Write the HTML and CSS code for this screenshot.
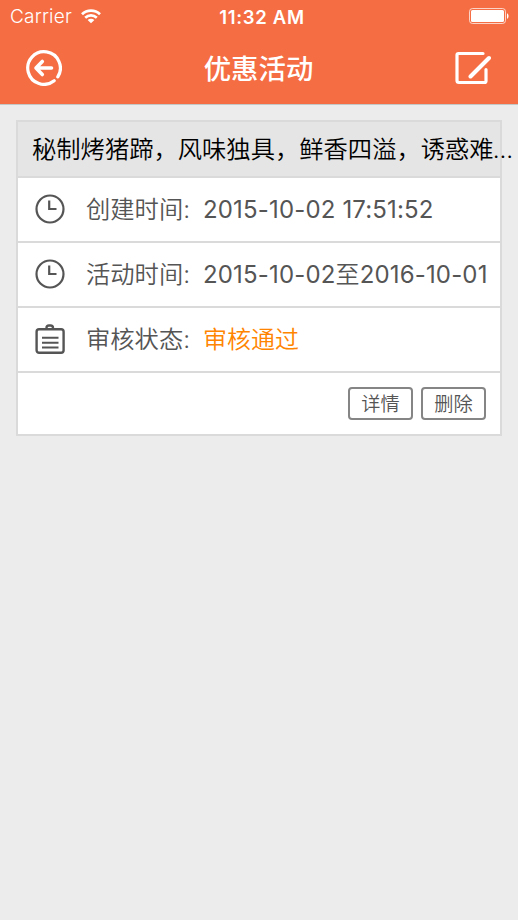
FILE: index.html
```
<!DOCTYPE html>
<html lang="zh-CN">
<head>
    <meta charset="UTF-8">
    <meta name="viewport" content="width=device-width, initial-scale=1.0">
    <title>优惠活动</title>
    <link rel="stylesheet" href="styles.css">
</head>
<body>

    <header class="top">
        <!-- Status bar -->
        <div class="status-bar">
            <div class="carrier">
                <span>Carrier</span>
                <svg width="20" height="15" viewBox="0 0 20 15" fill="none" stroke="#fff" stroke-width="2.7">
                    <path d="M1 5.2C6 0.3 14 0.3 19 5.2"/>
                    <path d="M4.2 8.7C7.5 5.6 12.5 5.6 15.8 8.7"/>
                    <path d="M10 14.3L6.6 11C8.6 9.3 11.4 9.3 13.4 11Z" fill="#fff" stroke="none"/>
                </svg>
            </div>
            <span class="clock">11:32 AM</span>
            <svg class="battery" width="40" height="17" viewBox="0 0 40 17">
                <rect x="0.5" y="0.5" width="36" height="15" rx="3" fill="none" stroke="#fff" stroke-opacity="0.7"/>
                <rect x="2" y="2" width="33" height="12" rx="1.5" fill="#fff"/>
                <path d="M38 5.2C40 6 40 10 38 10.8Z" fill="#fff"/>
            </svg>
        </div>

        <!-- Navigation -->
        <nav class="nav-bar">
            <a href="#" aria-label="返回">
                <svg width="36" height="36" viewBox="0 0 36 36" fill="none" stroke="#fff" stroke-width="3.2" stroke-linecap="round" stroke-linejoin="round">
                    <path d="M28.2 30.8A16.3 16.3 0 1 1 31.8 26.8"/>
                    <path d="M25.5 18H10M16.3 11.5L10 18L16.3 24.5" stroke-width="3.6"/>
                </svg>
            </a>
            <h1>优惠活动</h1>
            <a href="#" aria-label="编辑">
                <svg width="36" height="34" viewBox="0 0 36 34" fill="none" stroke="#fff" stroke-width="3.2" stroke-linecap="round" stroke-linejoin="round">
                    <path d="M28 2.5H3.5Q2 2.5 2 4V29.5Q2 31.5 4 31.5H29.5Q31 31.5 31 30V18.5"/>
                    <path d="M15.5 25.5L34 7" stroke-width="4"/>
                </svg>
            </a>
        </nav>
    </header>

    <main>
        <section class="card">
            <h2>秘制烤猪蹄，风味独具，鲜香四溢，诱惑难<span class="dots">...</span></h2>

            <div class="row">
                <svg class="icon" width="30" height="30" viewBox="0 0 30 30" fill="none" stroke="#555" stroke-width="2.2">
                    <circle cx="15" cy="15" r="13.5"/>
                    <path d="M14.2 6.5V15H21.5"/>
                </svg>
                <span class="label">创建时间:</span>
                <span class="date">2015-10-02 17:51:52</span>
            </div>

            <div class="row">
                <svg class="icon" width="30" height="30" viewBox="0 0 30 30" fill="none" stroke="#555" stroke-width="2.2">
                    <circle cx="15" cy="15" r="13.5"/>
                    <path d="M14.2 6.5V15H21.5"/>
                </svg>
                <span class="label">活动时间:</span>
                <span class="date">2015-10-02<span class="to">至</span>2016-10-01</span>
            </div>

            <div class="row">
                <svg class="icon" width="30" height="30" viewBox="0 0 30 30" fill="none" stroke="#555" stroke-width="2.4">
                    <rect x="1.6" y="5.3" width="27" height="23.5" rx="2.5"/>
                    <path d="M11.5 5V4Q11.5 1.5 14 1.5H15.5Q18 1.5 18 4V5"/>
                    <path d="M7 13.8H23.5M7 18.7H23.5M7 23.6H23.5" stroke-width="2"/>
                </svg>
                <span class="label">审核状态:</span>
                <span class="state">审核通过</span>
            </div>

            <div class="actions">
                <button type="button">详情</button>
                <button type="button">删除</button>
            </div>
        </section>
    </main>

</body>
</html>
```

FILE: styles.css
```
* {
    box-sizing: border-box;
}

body {
    margin: 0;
    min-height: 920px;
    overflow-x: hidden;
    background-color: #ececec;
    font-family: Inter, 'Noto Sans CJK SC', sans-serif;
    font-weight: 350;
    color: #555;
}

svg {
    display: block;
    flex-shrink: 0;
}

/* Header */
.top {
    height: 105px;
    border-bottom: 1px solid #c3c8c7;
    background-color: #f56d43;
    color: #fff;
}

.status-bar {
    display: grid;
    grid-template-columns: 1fr auto 1fr;
    align-items: center;
    height: 33px;
    padding: 0 9px 0 10px;
}

.carrier {
    display: flex;
    align-items: center;
    gap: 9px;
    font-size: 19px;
    font-weight: 300;
    letter-spacing: 0.2px;
}

.clock {
    margin-left: 5px;
    font-size: 18.5px;
    font-weight: 600;
    letter-spacing: 0.7px;
}

.battery {
    justify-self: end;
}

.nav-bar {
    display: flex;
    align-items: center;
    justify-content: space-between;
    height: 70px;
    padding: 0 27px 0 26px;
}

.nav-bar h1 {
    margin: 0;
    padding-top: 2px;
    font-size: 27.4px;
    font-weight: 500;
    line-height: 40px;
}

/* Activity card */
main {
    padding: 15px 16px 0;
}

.card {
    height: 316px;
    border: 2px solid #dadada;
    background-color: #fff;
}

.card h2 {
    height: 56px;
    margin: 0;
    padding-left: 14px;
    border-bottom: 2px solid #dadada;
    background-color: #e5e5e5;
    color: #000;
    font-size: 24.3px;
    font-weight: 350;
    line-height: 54px;
    white-space: nowrap;
}

.dots {
    margin-left: -1px;
}

.row {
    display: flex;
    align-items: center;
    height: 65px;
    padding-left: 17px;
    border-bottom: 2px solid #dadada;
    font-size: 24px;
    line-height: 63px;
    white-space: nowrap;
}

.icon {
    margin-bottom: 2px;
}

.label {
    width: 117px;
    margin-left: 21px;
    font-size: 24.3px;
}

.date {
    font-weight: 400;
    letter-spacing: 0.16px;
}

.to {
    font-weight: 350;
}

.state {
    color: #ff8400;
}

.actions {
    display: flex;
    justify-content: flex-end;
    gap: 8px;
    padding: 14px 14px 0 0;
}

.actions button {
    width: 65px;
    height: 33px;
    padding: 2px 0 0;
    border: 2px solid #858585;
    border-radius: 4px;
    background-color: #fff;
    color: #555;
    font-family: inherit;
    font-size: 19.2px;
    font-weight: 350;
    line-height: 27px;
}
```
